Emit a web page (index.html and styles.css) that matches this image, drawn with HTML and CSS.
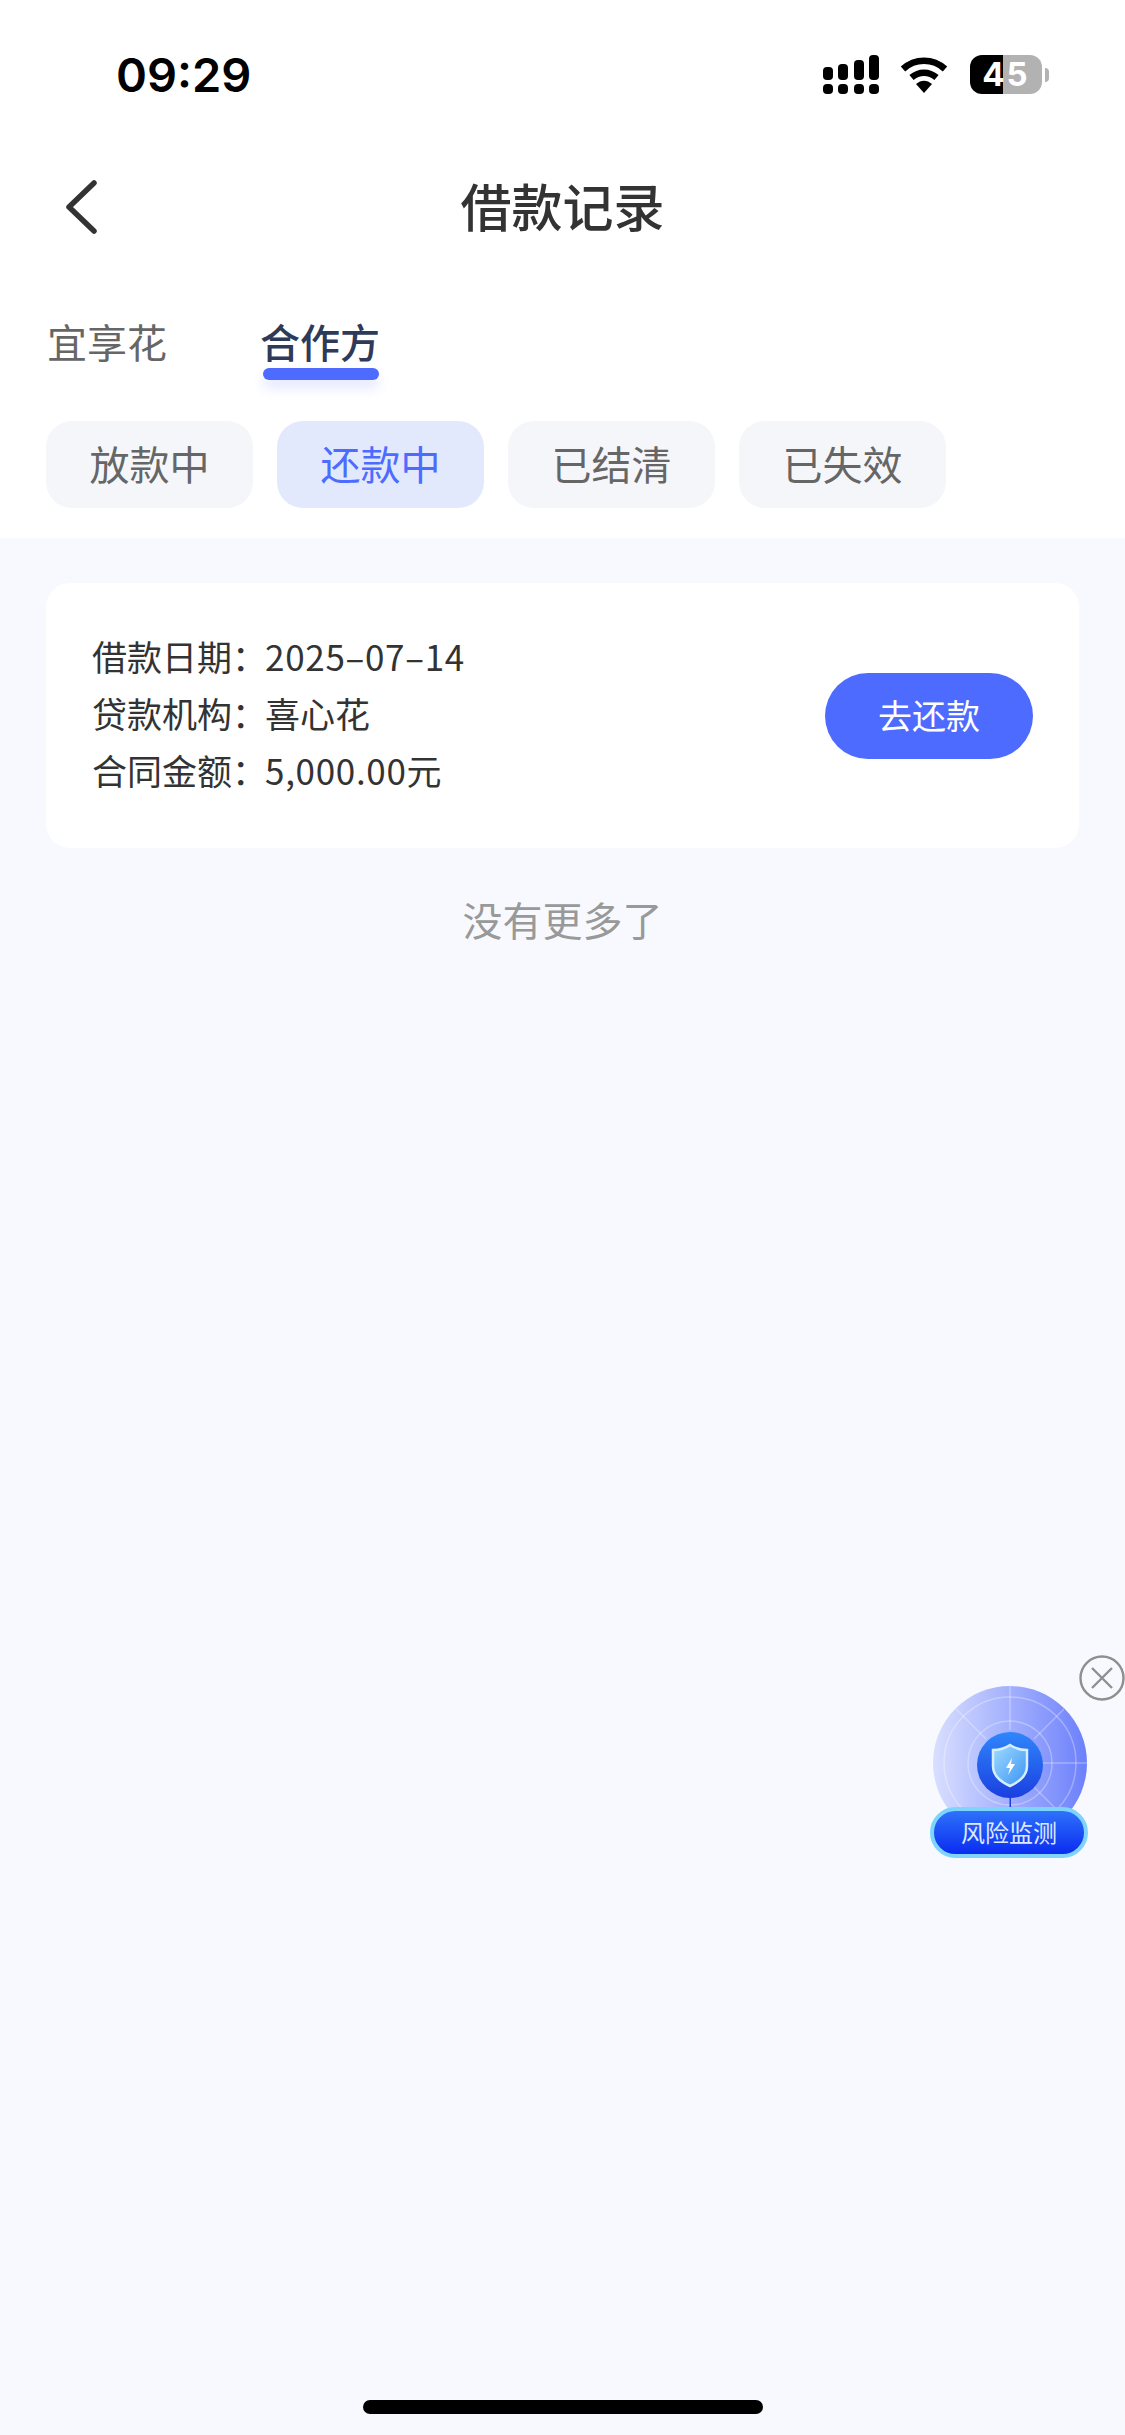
FILE: index.html
```html
<!DOCTYPE html>
<html lang="zh-CN">
<head>
  <meta charset="UTF-8" />
  <title>借款记录</title>
  <link rel="stylesheet" href="styles.css">
</head>
<body>
  <div class="page">
    <!-- 白色头部 -->
    <div class="header">
      <div class="status-bar">
        <span class="status-time">09:29</span>
        <div class="status-icons">
          <svg class="icon-signal" width="56" height="39" viewBox="0 0 56 39">
            <rect x="0" y="12" width="10" height="13" rx="4"/>
            <rect x="15" y="9" width="10" height="16" rx="4"/>
            <rect x="31" y="5" width="10" height="20" rx="4"/>
            <rect x="46" y="0" width="10" height="25" rx="4"/>
            <rect x="0" y="29" width="10" height="10" rx="4"/>
            <rect x="15" y="29" width="10" height="10" rx="4"/>
            <rect x="31" y="29" width="10" height="10" rx="4"/>
            <rect x="46" y="29" width="10" height="10" rx="4"/>
          </svg>
          <svg class="icon-wifi" width="48" height="36" viewBox="0 0 48 36">
            <path d="M3 12 C15 1 33 1 45 12" fill="none" stroke="#000" stroke-width="6.5"/>
            <path d="M11.5 20.5 C19 14 29 14 36.5 20.5" fill="none" stroke="#000" stroke-width="6.5"/>
            <path d="M16 27 C21 22.5 27 22.5 32 27 L24 36 Z"/>
          </svg>
          <div class="battery">
            <div class="battery-body">
              <span class="battery-num">45</span>
            </div>
            <div class="battery-nub"></div>
          </div>
        </div>
      </div>

      <div class="nav-bar">
        <svg class="nav-back" width="36" height="56" viewBox="0 0 36 56">
          <path d="M31 4 L6 28 L31 52" fill="none" stroke="#333" stroke-width="5.5" stroke-linecap="round" stroke-linejoin="round"/>
        </svg>
        <h1 class="nav-title">借款记录</h1>
      </div>

      <div class="tabs">
        <div class="tab">宜享花</div>
        <div class="tab tab-active">合作方</div>
      </div>

      <div class="filters">
        <div class="filter">放款中</div>
        <div class="filter filter-active">还款中</div>
        <div class="filter">已结清</div>
        <div class="filter">已失效</div>
      </div>
    </div>

    <!-- 列表 -->
    <div class="content">
      <div class="loan-card">
        <div class="loan-info">
          <div class="loan-row"><span class="loan-label">借款日期：</span><span class="loan-num">2025–07–14</span></div>
          <div class="loan-row"><span class="loan-label">贷款机构：</span><span>喜心花</span></div>
          <div class="loan-row"><span class="loan-label">合同金额：</span><span class="loan-num">5,000.00元</span></div>
        </div>
        <div class="repay-btn">去还款</div>
      </div>
      <div class="no-more">没有更多了</div>
    </div>

    <!-- 悬浮：风险监测 -->
    <div class="float-widget">
      <svg class="float-close" width="46" height="46" viewBox="0 0 46 46">
        <circle cx="23" cy="23" r="21.5" fill="none" stroke="#8f8f8f" stroke-width="2.4"/>
        <path d="M13 13 L33 33 M33 13 L13 33" stroke="#8f8f8f" stroke-width="2.4"/>
      </svg>
      <svg class="float-radar" width="160" height="150" viewBox="0 0 160 150">
        <defs>
          <linearGradient id="radarFill" x1="0" y1="0.5" x2="1" y2="0.5">
            <stop offset="0" stop-color="#d9dfff"/>
            <stop offset="1" stop-color="#6c80fb"/>
          </linearGradient>
          <linearGradient id="coreFill" x1="0" y1="0" x2="0" y2="1">
            <stop offset="0" stop-color="#2f86fb"/>
            <stop offset="1" stop-color="#1a3fe0"/>
          </linearGradient>
          <linearGradient id="shieldFill" x1="0" y1="0" x2="1" y2="1">
            <stop offset="0" stop-color="#9fdcff"/>
            <stop offset="1" stop-color="#3b92f5"/>
          </linearGradient>
        </defs>
        <circle cx="80" cy="78" r="77" fill="url(#radarFill)"/>
        <g fill="none" stroke="#fff" stroke-opacity="0.3" stroke-width="1.5">
          <circle cx="80" cy="78" r="66"/>
          <circle cx="80" cy="78" r="42"/>
          <path d="M80 1 V45 M157 78 H113 M26 24 L56 54 M134 24 L104 54 M134 132 L104 102"/>
        </g>
        <circle cx="80" cy="80" r="33" fill="url(#coreFill)"/>
        <path d="M80 60 C86 64 92 65 97 65 V81 C97 91 89 97 80 101 C71 97 63 91 63 81 V65 C68 65 74 64 80 60 Z" fill="url(#shieldFill)" stroke="#d6efff" stroke-width="2.5"/>
        <path d="M82 73 L76 83 H80 L78 90 L85 79 H81 Z" fill="#fff"/>
        <rect x="79.5" y="112" width="1.5" height="12" fill="#1a3fe0"/>
      </svg>
      <div class="float-label">风险监测</div>
    </div>

    <div class="home-bar"></div>
  </div>
</body>
</html>
```

FILE: styles.css
```css
* {
  margin: 0;
  padding: 0;
  box-sizing: border-box;
}
body {
  font-family: "Noto Sans CJK SC", "Noto Sans", sans-serif;
  color: #333;
  background: #f8f9fe;
}
.page {
  position: relative;
  width: 1125px;
  height: 2435px;
  overflow: hidden;
  background: #f8f9fe;
}

/* ---------- HEADER ---------- */
.header {
  background: #fff;
  height: 538px;
}
.status-bar {
  height: 150px;
  padding: 0 76px 0 116px;
  display: flex;
  align-items: flex-start;
  justify-content: space-between;
}
.status-time {
  font-family: Inter, "Liberation Sans", sans-serif;
  font-weight: 600;
  font-size: 47px;
  line-height: 50px;
  margin-top: 50px;
  color: #000;
}
.status-icons {
  display: flex;
  align-items: flex-start;
  margin-top: 55px;
}
.icon-signal {
  margin-right: 21px;
}
.icon-wifi {
  margin-top: 2px;
  margin-right: 22px;
}
.battery {
  display: flex;
  align-items: center;
}
.battery-body {
  width: 72px;
  height: 39px;
  border-radius: 12px;
  background: linear-gradient(to right, #000 0, #000 33px, #b2b2b2 33px, #b2b2b2 100%);
  display: flex;
  align-items: center;
  justify-content: center;
}
.battery-num {
  font-family: Inter, "Liberation Sans", sans-serif;
  font-weight: 700;
  font-size: 33px;
  letter-spacing: 2px;
  line-height: 39px;
  color: #fff;
}
.battery-nub {
  width: 4px;
  height: 14px;
  margin-left: 3px;
  border-radius: 0 4px 4px 0;
  background: #b2b2b2;
}

.nav-bar {
  position: relative;
  height: 114px;
  display: flex;
  align-items: center;
  justify-content: center;
}
.nav-back {
  position: absolute;
  left: 63px;
  top: 29px;
}
.nav-title {
  font-size: 51px;
  font-weight: 500;
  line-height: 72px;
  margin-bottom: 5px;
  color: #333;
}

.tabs {
  display: flex;
  gap: 93px;
  padding: 0 47px;
  height: 157px;
  padding-top: 48px;
}
.tab {
  position: relative;
  font-size: 40px;
  line-height: 58px;
  color: #666;
  height: 58px;
}
.tab-active {
  font-weight: 500;
  color: #2e3a59;
}
.tab-active::after {
  content: "";
  position: absolute;
  left: 3px;
  right: 1px;
  top: 56px;
  height: 12px;
  border-radius: 6px;
  background: #4e6bff;
  box-shadow: 0 8px 12px rgba(78, 107, 255, 0.16);
}

.filters {
  display: flex;
  gap: 24px;
  padding: 0 46px;
}
.filter {
  width: 207px;
  height: 87px;
  border-radius: 26px;
  background: #f5f6fa;
  color: #666;
  font-size: 40px;
  line-height: 84px;
  text-align: center;
}
.filter-active {
  background: #e3e9fd;
  color: #4e6bff;
}

/* ---------- LISTA ---------- */
.content {
  padding: 45px 46px 0;
}
.loan-card {
  height: 265px;
  border-radius: 24px;
  background: #fff;
  padding: 0 46px;
  display: flex;
  align-items: center;
  justify-content: space-between;
}
.loan-info {
  padding-bottom: 6px;
}
.loan-row {
  display: flex;
  font-size: 35px;
  line-height: 57px;
  white-space: nowrap;
  color: #333;
}
.loan-label {
  flex: none;
  width: 173px;
}
.loan-num {
  letter-spacing: 0.7px;
}
.repay-btn {
  width: 208px;
  height: 86px;
  border-radius: 43px;
  background: #4e6bff;
  color: #fff;
  font-size: 34px;
  line-height: 84px;
  text-align: center;
}
.no-more {
  margin-top: 42px;
  text-align: center;
  font-size: 40px;
  line-height: 58px;
  color: #999;
}

/* ---------- WIDGET FLOTTANTE ---------- */
.float-widget {
  position: absolute;
  left: 925px;
  top: 1655px;
  width: 200px;
  height: 210px;
}
.float-close {
  position: absolute;
  left: 154px;
  top: 0;
}
.float-radar {
  position: absolute;
  left: 5px;
  top: 30px;
}
.float-label {
  position: absolute;
  left: 5px;
  top: 152px;
  width: 158px;
  height: 51px;
  border-radius: 26px;
  border: 4px solid #7fd4fb;
  background: linear-gradient(#2e72fb, #0a2cf0);
  color: #dfe8ff;
  font-size: 24px;
  line-height: 41px;
  text-align: center;
}

.home-bar {
  position: absolute;
  left: 363px;
  top: 2400px;
  width: 400px;
  height: 14px;
  border-radius: 7px;
  background: #000;
}
```
